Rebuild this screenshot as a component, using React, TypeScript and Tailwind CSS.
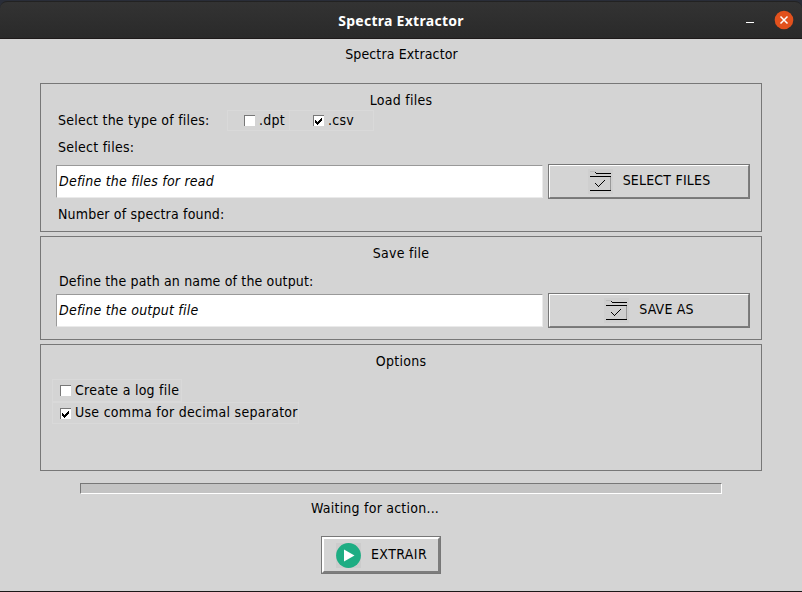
import React from "react";

const SANS = "font-['DejaVu_Sans_Condensed','DejaVu_Sans',sans-serif] [font-stretch:condensed]";

function FolderIcon() {
  return (
    <svg width="25" height="25" viewBox="0 0 25 25" shapeRendering="crispEdges" className="shrink-0">
      <rect width="25" height="25" fill="#cfcfcf" />
      <rect x="2" y="2" width="5" height="1" fill="#bcbcbc" />
      <rect x="7" y="3" width="1" height="1" fill="#111" />
      <rect x="8" y="4" width="15" height="1" fill="#000" />
      <rect x="2" y="7" width="21" height="1" fill="#000" />
      <rect x="22" y="8" width="1" height="13" fill="#999" />
      <rect x="2" y="21" width="21" height="1" fill="#000" />
      <path
        d="M7 14h1v1h1v1h1v1h1v-1h1v-1h1v-1h1v-1h1v-1h1v-1h1v1h-1v1h-1v1h-1v1h-1v1h-1v1h-1v1h-1v-1h-1v-1h-1v-1h-1z"
        fill="#000"
      />
    </svg>
  );
}

function Check({ checked = false }: { checked?: boolean }) {
  return (
    <span className="block h-[11px] w-[11px] shrink-0 border-t border-l border-[#777] bg-white">
      {checked && (
        <svg width="10" height="10" viewBox="0 0 10 10" shapeRendering="crispEdges" className="block">
          <path d="M1 4h1v1h1v1h1v-1h1v-1h1v-1h1v-1h1v3h-1v1h-1v1h-1v1h-1v1h-1v-1h-1v-1h-1z" fill="#000" />
        </svg>
      )}
    </span>
  );
}

function PathField({ hint, label }: { hint: string; label: string }) {
  return (
    <div className="ml-[15px] flex h-[35px] items-center">
      <div className="flex h-[33px] w-[487px] items-center border border-t-[#999] border-r-[#eaeaea] border-b-[#eaeaea] border-l-[#999] bg-white pl-0.5 text-[14px] tracking-[0.22px] italic">
        <span className="relative -top-px">{hint}</span>
      </div>
      <button className="ml-[5px] flex h-[35px] w-[202px] border border-[#777]">
        <span className="flex h-full w-full items-center justify-center gap-[10px] border border-t-white border-r-[#7d7d7d] border-b-[#7d7d7d] border-l-white tracking-[0.2px]">
          <FolderIcon />
          <span className="-mt-[3px]">{label}</span>
        </span>
      </button>
    </div>
  );
}

export default function App() {
  return (
    <div className={`flex h-[592px] w-[802px] flex-col overflow-hidden border-b border-[#1c1819] bg-[#d4d4d4] text-[14px] leading-5 tracking-[0.26px] whitespace-nowrap text-black ${SANS}`}>
      <header className="h-[39px] shrink-0 bg-[#292d38] pt-px">
        <div className="flex h-[38px] items-center rounded-t-[7px] border-t border-b border-t-[#222] border-b-[#1e1a1a] bg-linear-to-b from-[#333] to-[#2a2a2a]">
          <div className="w-[120px]" />
          <h1 className="mt-0.5 flex-1 text-center font-['Noto_Sans',sans-serif] text-[14px] font-bold tracking-[0.28px] text-white [font-stretch:normal]">Spectra Extractor</h1>
          <div className="flex w-[120px] items-center justify-end pr-2">
            <span className="mt-[5px] mr-5 h-px w-2 bg-white" />
            <svg width="20" height="20" viewBox="0 0 20 20">
              <circle cx="10" cy="10" r="9.3" fill="#e2511d" />
              <path d="M6.5 6.5l7 7M13.5 6.5l-7 7" stroke="white" strokeWidth="1.5" />
            </svg>
          </div>
        </div>
      </header>

      <div className="mt-[5px] pl-px text-center tracking-[0.13px]">Spectra Extractor</div>

      <section className="mx-10 mt-[19px] h-[149px] shrink-0 border border-[#777] pt-[6px]">
        <div className="text-center">Load files</div>
        <div className="flex h-[21px] items-start pl-[17px]">
          <span className="w-[169px] tracking-[0.23px]">Select the type of files:</span>
          <label className="flex h-[21px] w-[63px] items-center gap-1 border border-[#d9d9d9] pl-4">
            <Check />
            <span className="-mt-0.5">.dpt</span>
          </label>
          <label className="-ml-px flex h-[21px] w-[85px] items-center gap-1 border border-[#d9d9d9] pl-[23px]">
            <Check checked />
            <span className="-mt-0.5">.csv</span>
          </label>
        </div>
        <div className="mt-[6px] mb-[7px] pl-[17px]">Select files:</div>
        <PathField hint="Define the files for read" label="SELECT FILES" />
        <div className="mt-[5px] pl-[17px] tracking-[0.18px]">Number of spectra found:</div>
      </section>

      <section className="mx-10 mt-1 h-[104px] shrink-0 border border-[#777] pt-[6px]">
        <div className="text-center">Save file</div>
        <div className="mt-2 mb-0.5 pl-[18px] tracking-[0.16px]">Define the path an name of the output:</div>
        <PathField hint="Define the output file" label="SAVE AS" />
      </section>

      <section className="mx-10 mt-1 h-[127px] shrink-0 border border-[#777] pt-[6px]">
        <div className="text-center">Options</div>
        <div className="mt-2 flex flex-col items-start pl-[11px]">
          <label className="flex h-[23px] w-[130px] items-center gap-1 border border-[#d9d9d9] pl-[7px]">
            <Check />
            <span className="-mt-0.5">Create a log file</span>
          </label>
          <label className="flex h-[22px] w-[247px] items-start gap-1 border border-[#d9d9d9] pt-[5px] pl-[7px]">
            <Check checked />
            <span className="-mt-[6px] tracking-[0.28px]">Use comma for decimal separator</span>
          </label>
        </div>
      </section>

      <div className="mx-20 mt-3 h-[11px] shrink-0 border border-t-[#777] border-r-white border-b-white border-l-[#777] bg-[#c3c3c3]" />
      <div className="mt-1 pl-[311px] tracking-[0.23px]">Waiting for action...</div>
      <button className="mt-[18px] ml-[321px] flex h-[38px] w-[120px] shrink-0 border border-[#777]">
        <span className="flex h-full w-full items-start justify-start gap-[10px] border-2 border-t-white border-r-[#7d7d7d] border-b-[#7d7d7d] border-l-white pt-1 pl-3 tracking-[0.4px]">
          <svg width="25" height="25" viewBox="0 0 25 25" className="shrink-0">
            <rect width="25" height="25" fill="#cccccc" />
            <circle cx="12.5" cy="12.5" r="12.4" fill="#1ead83" />
            <path d="M8 6.5l10.5 6-10.5 6z" fill="white" />
          </svg>
          <span className="mt-px">EXTRAIR</span>
        </span>
      </button>
    </div>
  );
}
